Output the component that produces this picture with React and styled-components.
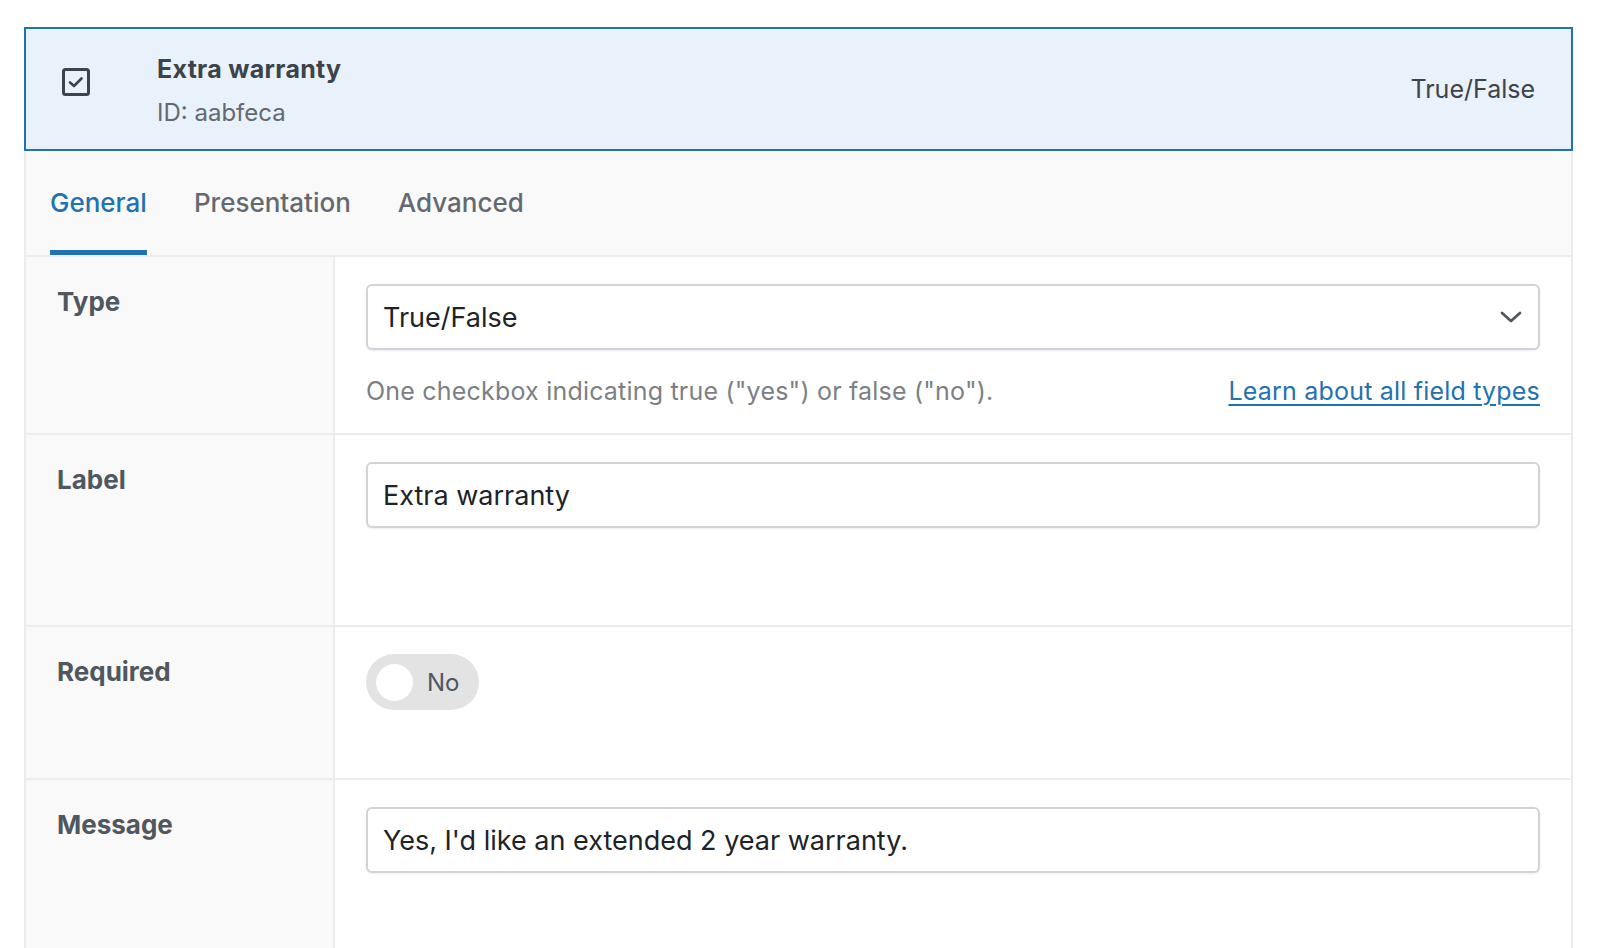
import React from 'react'
import styled, { createGlobalStyle } from 'styled-components'

const GlobalStyle = createGlobalStyle`
  * { box-sizing: border-box; }
  html, body { overflow: hidden; }
  body {
    margin: 0;
    padding: 27px 25px 0 24px;
    background: #ffffff;
    font-family: Inter, "Noto Sans", "Liberation Sans", sans-serif;
    color: #1d2327;
  }
`

const Panel = styled.div`
  border: 2px solid #ececec;
  border-top: none;
  border-bottom: none;
  background: #ffffff;
`

const Header = styled.div`
  display: flex;
  align-items: center;
  height: 124px;
  margin: 0 -2px;
  padding: 0 36px 0 36px;
  background: #e9f1fa;
  border: 2px solid #2271b1;
`

const IconBox = styled.div`
  width: 95px;
  margin-bottom: 14px;
  svg { display: block; }
`

const Titles = styled.div`
  flex: 1;
  display: flex;
  flex-direction: column;
  gap: 14px;
  margin-top: 4px;
`

const Title = styled.div`
  font-size: 25px;
  line-height: 30px;
  font-weight: 700;
  color: #3c434a;
  letter-spacing: 0.3px;
`

const SubTitle = styled.div`
  font-size: 24px;
  line-height: 30px;
  color: #646970;
`

const TypeTag = styled.div`
  font-size: 25px;
  color: #3c434a;
`

const TabBar = styled.div`
  display: flex;
  gap: 47px;
  height: 106px;
  padding: 0 0 0 24px;
  background: #f9f9f9;
  border-bottom: 2px solid #ececec;
`

const Tab = styled.div`
  display: flex;
  align-items: center;
  padding-top: 4px;
  font-size: 26px;
  font-weight: 500;
  color: ${p => (p.$active ? '#2271b1' : '#646970')};
  border-bottom: 5px solid ${p => (p.$active ? '#2271b1' : 'transparent')};
`

const Row = styled.div`
  display: grid;
  grid-template-columns: 309px 1fr;
  min-height: ${p => p.$height}px;
  border-bottom: 2px solid #ececec;
  &:last-child { border-bottom: none; }
`

const LabelCell = styled.div`
  background: #f9f9f9;
  border-right: 2px solid #ececec;
  padding: 29px 0 0 31px;
  font-size: 26px;
  font-weight: 700;
  color: #50575e;
`

const FieldCell = styled.div`
  padding: 27px 31px 27px 31px;
`

const TextBox = styled.div`
  position: relative;
  display: flex;
  align-items: center;
  height: 66px;
  padding: 0 15px;
  border: 2px solid #d0d3d8;
  border-radius: 6px;
  background: #ffffff;
  box-shadow: 0 1px 2px rgba(16, 24, 40, 0.08);
  font-size: 27px;
  color: #1d2327;
`

const Chevron = styled.svg`
  position: absolute;
  right: 15px;
  top: 50%;
  transform: translateY(-50%);
`

const HelpLine = styled.div`
  display: flex;
  justify-content: space-between;
  align-items: center;
  margin-top: 26px;
  font-size: 25px;
  letter-spacing: 0.2px;
  color: #7c7f84;
`

const HelpLink = styled.a`
  color: #2271b1;
  text-decoration: underline;
  text-underline-offset: 4px;
  text-decoration-thickness: 2px;
  cursor: pointer;
`

const Toggle = styled.div`
  display: inline-flex;
  align-items: center;
  gap: 14px;
  width: 113px;
  height: 56px;
  padding: 0 10px;
  border-radius: 28px;
  background: #e3e3e3;
  font-size: 24px;
  color: #50575e;
`

const Knob = styled.span`
  width: 37px;
  height: 37px;
  border-radius: 50%;
  background: #ffffff;
`

const CheckIcon = () => (
  <svg width="28" height="28" viewBox="0 0 28 28">
    <rect x="1.5" y="1.5" width="25" height="25" rx="2" fill="none" stroke="#3c434a" strokeWidth="3" />
    <path d="M8 14.5 L12 18 L19.5 10.5" fill="none" stroke="#3c434a" strokeWidth="2.6" strokeLinecap="round" strokeLinejoin="round" />
  </svg>
)

export default function App() {
  return (
    <>
      <GlobalStyle />
      <Panel>
        <Header>
          <IconBox><CheckIcon /></IconBox>
          <Titles>
            <Title>Extra warranty</Title>
            <SubTitle>ID: aabfeca</SubTitle>
          </Titles>
          <TypeTag>True/False</TypeTag>
        </Header>
        <TabBar>
          <Tab $active>General</Tab>
          <Tab>Presentation</Tab>
          <Tab>Advanced</Tab>
        </TabBar>
        <Row $height={178}>
          <LabelCell>Type</LabelCell>
          <FieldCell>
            <TextBox>
              True/False
              <Chevron width="24" height="24" viewBox="0 0 24 24">
                <path d="M3 8 L12 16 L21 8" fill="none" stroke="#50575e" strokeWidth="2.8" strokeLinecap="round" strokeLinejoin="round" />
              </Chevron>
            </TextBox>
            <HelpLine>
              <span>One checkbox indicating true ("yes") or false ("no").</span>
              <HelpLink>Learn about all field types</HelpLink>
            </HelpLine>
          </FieldCell>
        </Row>
        <Row $height={192}>
          <LabelCell>Label</LabelCell>
          <FieldCell>
            <TextBox>Extra warranty</TextBox>
          </FieldCell>
        </Row>
        <Row $height={153}>
          <LabelCell>Required</LabelCell>
          <FieldCell>
            <Toggle>
              <Knob />
              No
            </Toggle>
          </FieldCell>
        </Row>
        <Row $height={168}>
          <LabelCell>Message</LabelCell>
          <FieldCell>
            <TextBox>Yes, I'd like an extended 2 year warranty.</TextBox>
          </FieldCell>
        </Row>
      </Panel>
    </>
  )
}
